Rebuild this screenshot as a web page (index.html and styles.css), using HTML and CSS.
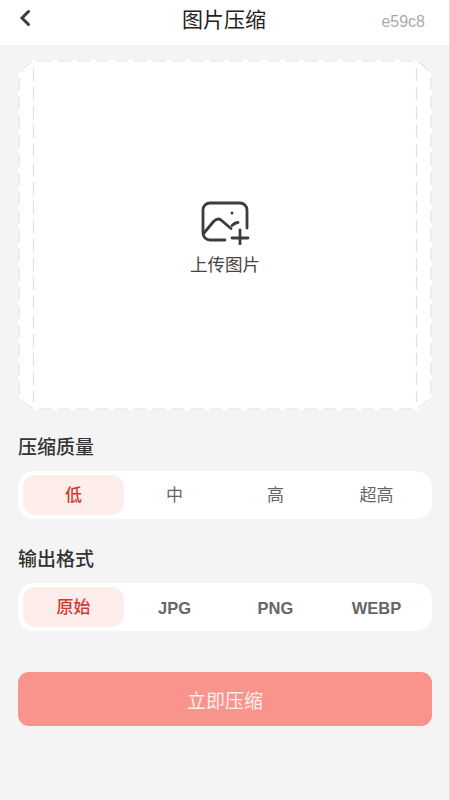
FILE: index.html
```html
<!DOCTYPE html>
<html lang="zh-CN">
<head>
<meta charset="utf-8">
<title>图片压缩</title>
<link rel="stylesheet" href="styles.css">
</head>
<body>
<div class="page">
  <header class="nav">
    <svg class="back" width="14" height="18" viewBox="0 0 14 18"><path d="M10.500 2.500 4 9l6.500 6.500" fill="none" stroke="#3a3a4a" stroke-width="3" stroke-linecap="round"/></svg>
    <h1 class="title">图片压缩</h1>
    <span class="code">e59c8</span>
  </header>
  <main class="content">
    <section class="upload">
      <svg class="dash" width="414" height="350" viewBox="0 0 414 350" fill="none" stroke="#e0e0e0" stroke-width="1.200" stroke-dasharray="13 6">
        <rect x="1" y="1" width="412" height="348" rx="20"/>
        <path d="M15.500 8V342M398.500 8V342"/>
      </svg>
      <svg class="upload-icon" width="50" height="44" viewBox="0 0 50 44" fill="none" stroke="#3c3c3c" stroke-width="2.800" stroke-linecap="round" stroke-linejoin="round">
        <path d="M25 39H10a7 7 0 0 1-7-7V9a7 7 0 0 1 7-7h30a7 7 0 0 1 7 7v18"/>
        <path d="M4 32 14 20Q17.500 16.500 21 19L31 27.500"/>
        <path d="M32 24.500Q35 21.500 38 21.500"/>
        <path d="M32 37H48M40 29V43"/>
        <circle cx="32" cy="12" r="1.500" fill="#3c3c3c" stroke="none"/>
      </svg>
      <span class="upload-text">上传图片</span>
    </section>
    <h2 class="label">压缩质量</h2>
    <div class="seg">
      <span class="opt on">低</span><span class="opt">中</span><span class="opt">高</span><span class="opt">超高</span>
    </div>
    <h2 class="label second">输出格式</h2>
    <div class="seg">
      <span class="opt on">原始</span><span class="opt latin">JPG</span><span class="opt latin">PNG</span><span class="opt latin">WEBP</span>
    </div>
    <button class="submit">立即压缩</button>
  </main>
</div>
</body>
</html>
```
FILE: styles.css
```css
* { box-sizing: border-box; }
html, body { margin: 0; padding: 0; }
body {
  width: 450px;
  height: 800px;
  overflow: hidden;
  background: #f4f4f5;
  font-family: "Liberation Sans", "Noto Sans CJK SC", sans-serif;
}
.page {
  display: flex;
  flex-direction: column;
  height: 800px;
  border-right: 1px solid #dedede;
}
.nav {
  height: 45px;
  background: #fff;
  display: grid;
  grid-template-columns: 1fr auto 1fr;
  align-items: center;
  padding: 0 24px 5px 18px;
}
.back { justify-self: start; margin-bottom: 4px; }
.title { margin: 0 0 0 5px; font-size: 21px; font-weight: 400; color: #222; line-height: 30px; }
.code { justify-self: end; margin-top: 4px; font-size: 16px; color: #aaa; }
.content { padding: 15px 17px 0 18px; display: flex; flex-direction: column; }
.upload {
  position: relative;
  height: 350px;
  background: #fff;
  border-radius: 20px;
  display: flex;
  flex-direction: column;
  align-items: center;
  padding-top: 141px;
}
.dash { position: absolute; left: 0; top: 0; }
.upload-text { margin-top: 8px; font-size: 17.5px; line-height: 24px; color: #444; }
.label { margin: 25px 0 0; font-size: 19px; font-weight: 500; line-height: 26px; color: #333; }
.label.second { margin-top: 28px; }
.seg {
  margin-top: 10px;
  height: 48px;
  background: #fff;
  border-radius: 16px;
  padding: 4px 5px;
  display: grid;
  grid-template-columns: repeat(4, 1fr);
}
.opt {
  display: flex;
  align-items: center;
  justify-content: center;
  font-size: 17px;
  line-height: 20px;
  padding-top: 1px;
  color: #666;
  border-radius: 12px;
}
.opt.latin { font-size: 16.5px; font-weight: 700; }
.opt.on { background: #fdeeeb; color: #d23c30; font-weight: 500; }
.submit {
  margin-top: 41px;
  height: 54px;
  border: 0;
  border-radius: 11px;
  background: #f9948c;
  color: #feefed;
  font-family: inherit;
  font-size: 19px;
}
```
